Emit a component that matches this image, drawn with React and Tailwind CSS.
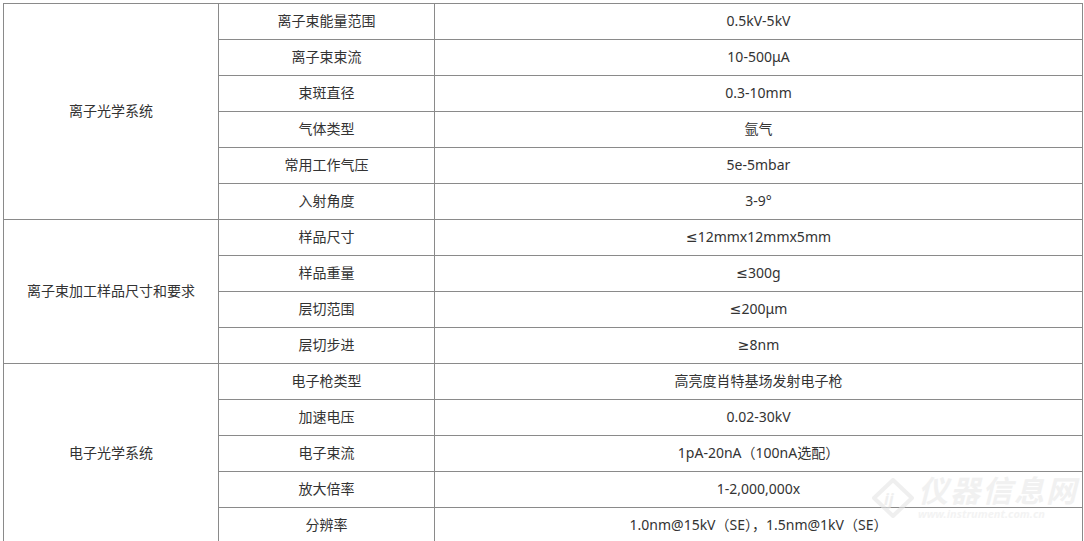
const GROUPS = [
  {
    name: '离子光学系统',
    rows: [
      ['离子束能量范围', '0.5kV-5kV'],
      ['离子束束流', '10-500μA'],
      ['束斑直径', '0.3-10mm'],
      ['气体类型', '氩气'],
      ['常用工作气压', '5e-5mbar'],
      ['入射角度', '3-9°'],
    ],
  },
  {
    name: '离子束加工样品尺寸和要求',
    rows: [
      ['样品尺寸', '≤12mmx12mmx5mm'],
      ['样品重量', '≤300g'],
      ['层切范围', '≤200μm'],
      ['层切步进', '≥8nm'],
    ],
  },
  {
    name: '电子光学系统',
    rows: [
      ['电子枪类型', '高亮度肖特基场发射电子枪'],
      ['加速电压', '0.02-30kV'],
      ['电子束流', '1pA-20nA（100nA选配）'],
      ['放大倍率', '1-2,000,000x'],
      ['分辨率', '1.0nm@15kV（SE），1.5nm@1kV（SE）'],
    ],
  },
];

const SPAN = { 6: 'row-span-6', 4: 'row-span-4', 5: 'row-span-5' };

function Cell({ children, className = '' }) {
  return (
    <div className={`flex items-center justify-center pb-[2px] border-r border-b border-[#8a8a8a] text-center ${className}`}>
      {children}
    </div>
  );
}

export default function App() {
  return (
    <div className="relative w-[1084px] h-[541px] overflow-hidden bg-white text-[14px] text-[#333] font-['Noto_Sans','DejaVu_Sans','Noto_Sans_CJK_SC',sans-serif]">
      <div className="ml-[3px] mt-[3px] grid w-[1080px] grid-cols-[215px_216px_648px] auto-rows-[36px] border-l border-t border-[#8a8a8a]">
        {GROUPS.map((g) => [
          <Cell key={g.name} className={SPAN[g.rows.length]}>{g.name}</Cell>,
          ...g.rows.flatMap(([k, v]) => [
            <Cell key={k}>{k}</Cell>,
            <Cell key={k + 'v'}>{v}</Cell>,
          ]),
        ])}
      </div>

      {/* watermark */}
      <div className="pointer-events-none absolute left-[872px] top-[476px] flex items-center gap-1 opacity-60">
        <svg width="42" height="40" viewBox="0 0 42 40">
          <path d="M21 2 L40 20 L21 38 L2 20 Z" fill="none" stroke="#e6e6e6" strokeWidth="4" strokeLinejoin="round" />
          <text x="12" y="27" fontSize="16" fontStyle="italic" fontWeight="bold" fill="#e6e6e6">ij</text>
        </svg>
        <div className="flex flex-col leading-none">
          <span className="text-[30px] font-bold italic tracking-[2px] text-[#e8e8e8]">仪器信息网</span>
          <span className="mt-[2px] text-[11px] font-bold italic text-[#ececec]">www.instrument.com.cn</span>
        </div>
      </div>
    </div>
  );
}
